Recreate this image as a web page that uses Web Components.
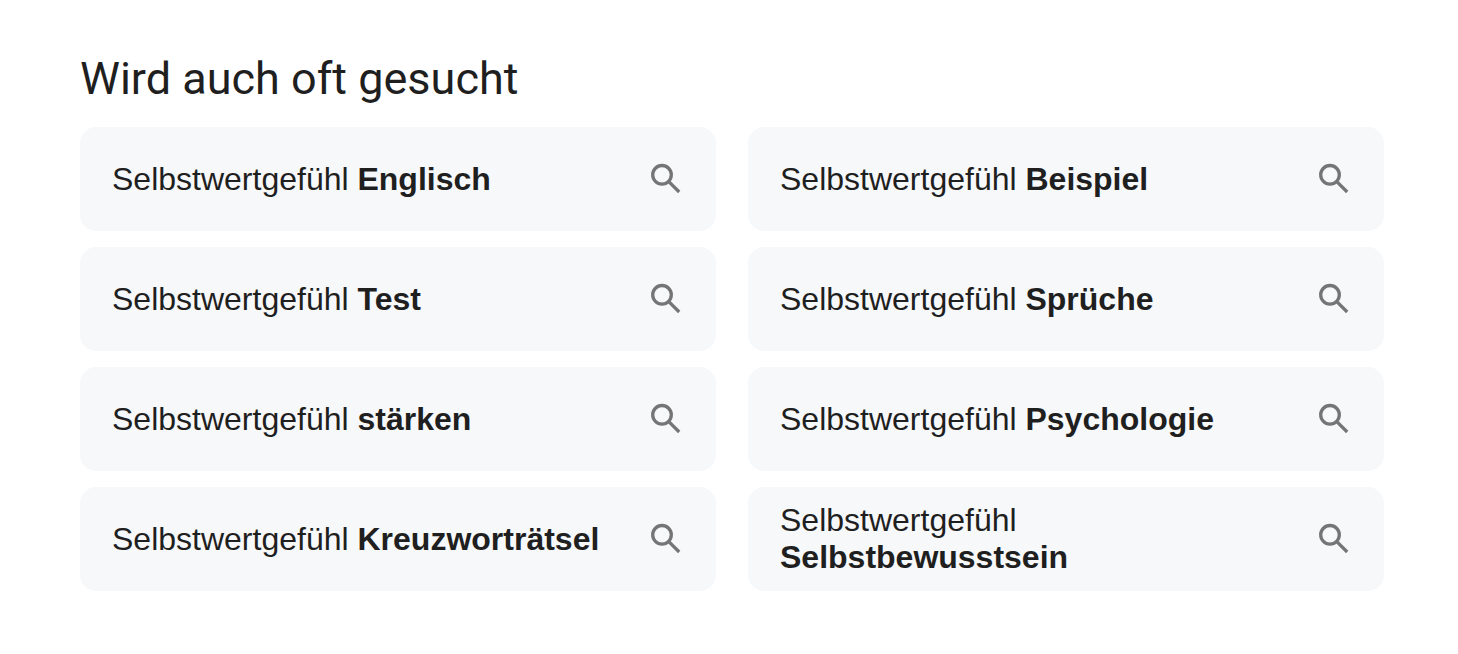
<!DOCTYPE html>
<html lang="de">
<head>
<meta charset="utf-8">
<meta name="viewport" content="width=device-width, initial-scale=1">
<title>Wird auch oft gesucht</title>
<style>
body { margin: 0; background: #fff; color: #1f1f1f; font-family: "Liberation Sans", Arial, sans-serif; }
</style>
</head>
<body>
<related-searches>
  <span slot="heading">Wird auch oft gesucht</span>
  <search-suggestion>Selbstwertgefühl <b>Englisch</b></search-suggestion>
  <search-suggestion>Selbstwertgefühl <b>Beispiel</b></search-suggestion>
  <search-suggestion>Selbstwertgefühl <b>Test</b></search-suggestion>
  <search-suggestion>Selbstwertgefühl <b>Sprüche</b></search-suggestion>
  <search-suggestion>Selbstwertgefühl <b>stärken</b></search-suggestion>
  <search-suggestion>Selbstwertgefühl <b>Psychologie</b></search-suggestion>
  <search-suggestion>Selbstwertgefühl <b>Kreuzworträtsel</b></search-suggestion>
  <search-suggestion>Selbstwertgefühl <b>Selbstbewusstsein</b></search-suggestion>
</related-searches>

<template id="related-searches">
  <style>
    :host { display: block; padding: 52px 74px 64px 80px; }
    h2 { margin: 0 0 21px; font: 400 45px/54px Roboto, sans-serif; }
    .grid { display: grid; grid-template-columns: 1fr 1fr; gap: 16px 32px; }
  </style>
  <section aria-labelledby="title">
    <h2 id="title"><slot name="heading"></slot></h2>
    <div class="grid"><slot></slot></div>
  </section>
</template>

<template id="search-suggestion">
  <style>
    :host { display: block; }
    a { display: flex; align-items: center; justify-content: space-between; gap: 32px; box-sizing: border-box; min-height: 104px; padding: 12px 30px 12px 32px; border-radius: 16px; background: #f7f8fa; color: inherit; text-decoration: none; font-size: 32px; line-height: 37px; }
    search-icon { flex: none; }
  </style>
  <a href="#"><span><slot></slot></span><search-icon></search-icon></a>
</template>

<template id="search-icon">
  <style>
    :host { display: block; width: 40px; height: 40px; color: #757575; }
    svg { display: block; width: 100%; height: 100%; fill: none; stroke: currentColor; stroke-width: 3.3; }
  </style>
  <svg viewBox="0 0 40 40" aria-hidden="true"><circle cx="16" cy="15.8" r="9.3"/><path d="M22.300 22.100 33.200 33"/></svg>
</template>

<script>
class TemplateElement extends HTMLElement {
  constructor() {
    super();
    const template = document.getElementById(this.localName);
    this.attachShadow({ mode: "open" }).append(template.content.cloneNode(true));
  }
}
for (const name of ["search-icon", "search-suggestion", "related-searches"]) {
  customElements.define(name, class extends TemplateElement {});
}
</script>
</body>
</html>
